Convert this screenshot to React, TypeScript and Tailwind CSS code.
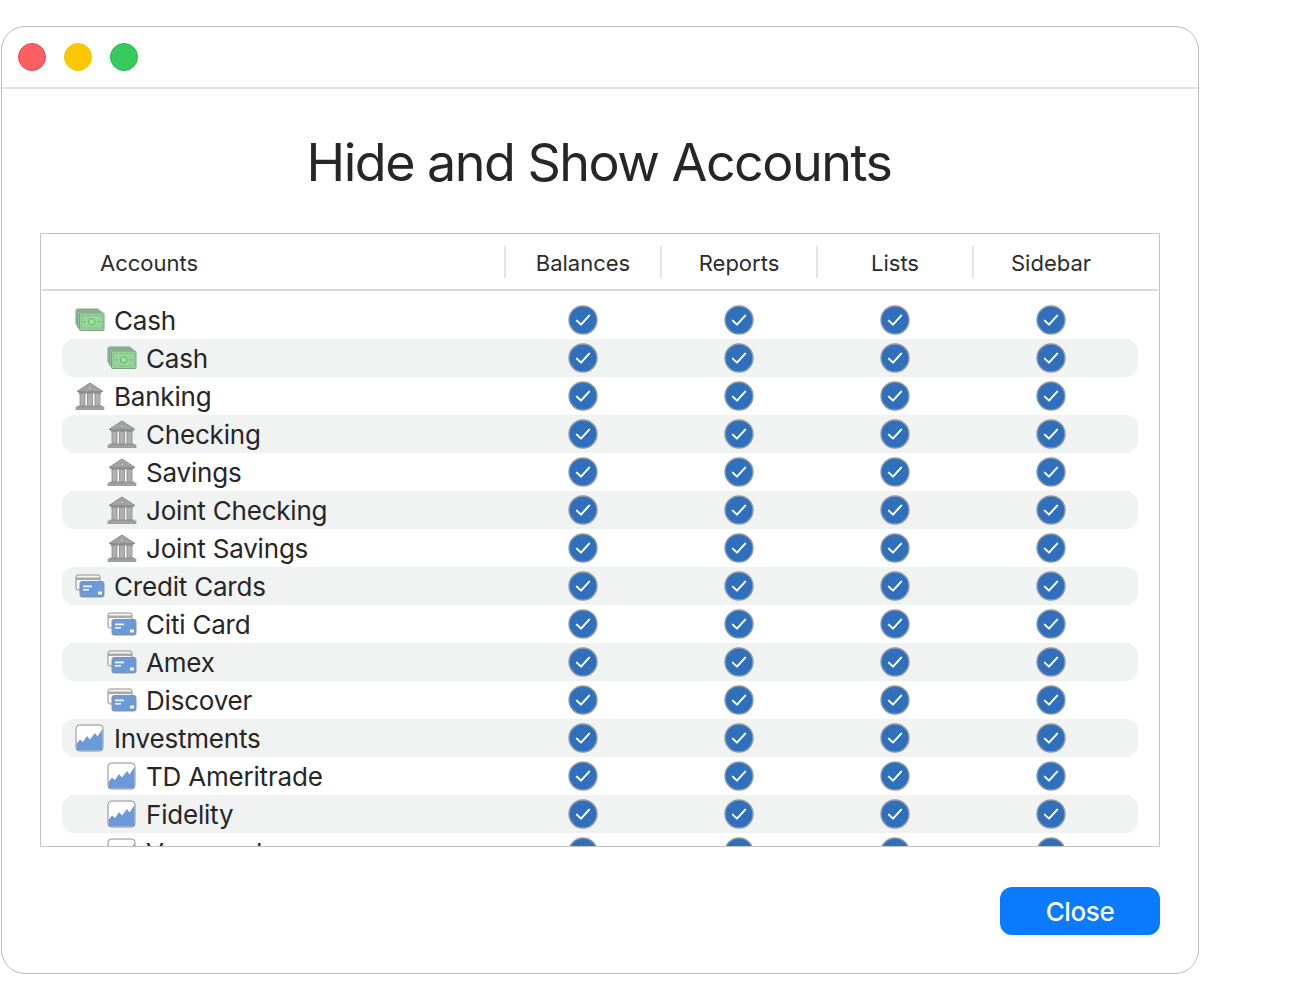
import React from 'react';

type Kind = 'cash' | 'bank' | 'card' | 'chart';

interface Row {
  name: string;
  kind: Kind;
  child?: boolean;
}

const rows: Row[] = [
  { name: 'Cash', kind: 'cash' },
  { name: 'Cash', kind: 'cash', child: true },
  { name: 'Banking', kind: 'bank' },
  { name: 'Checking', kind: 'bank', child: true },
  { name: 'Savings', kind: 'bank', child: true },
  { name: 'Joint Checking', kind: 'bank', child: true },
  { name: 'Joint Savings', kind: 'bank', child: true },
  { name: 'Credit Cards', kind: 'card' },
  { name: 'Citi Card', kind: 'card', child: true },
  { name: 'Amex', kind: 'card', child: true },
  { name: 'Discover', kind: 'card', child: true },
  { name: 'Investments', kind: 'chart' },
  { name: 'TD Ameritrade', kind: 'chart', child: true },
  { name: 'Fidelity', kind: 'chart', child: true },
  { name: 'Vanguard', kind: 'chart', child: true },
];

const columns = ['Balances', 'Reports', 'Lists', 'Sidebar'];

const AccountIcon: React.FC<{ kind: Kind }> = ({ kind }) => {
  if (kind === 'cash') {
    return (
      <svg width="30" height="24" viewBox="0 0 30 24" className="shrink-0">
        <rect x="1" y="1" width="23" height="16" rx="1.5" fill="#94bd96" stroke="#7f9f86" />
        <rect x="2.5" y="3" width="24" height="17" rx="1.5" fill="#94c498" stroke="#7f9f86" />
        <rect x="4.5" y="5" width="24.5" height="17.5" rx="1" fill="#98d39c" stroke="#7d9c84" />
        <rect x="6.5" y="7.5" width="20.5" height="12.5" fill="#97d69b" stroke="#7fb088" strokeWidth="0.6" />
        <circle cx="16.7" cy="13.8" r="3.2" fill="#8bef8f" stroke="#6aa878" />
        <circle cx="9.5" cy="13.8" r="0.9" fill="#6f9f7c" />
        <circle cx="24" cy="13.8" r="0.9" fill="#6f9f7c" />
      </svg>
    );
  }
  if (kind === 'bank') {
    return (
      <svg width="30" height="28" viewBox="0 0 30 28" className="shrink-0">
        <path d="M15 1 L28 9.5 L2 9.5 Z" fill="#a4a4a4" stroke="#8a8a8a" strokeLinejoin="round" />
        <circle cx="15" cy="6.3" r="1.6" fill="#c9c9c9" stroke="#858585" strokeWidth="0.6" />
        <rect x="3.5" y="9.5" width="23" height="2" fill="#8f8f8f" />
        <rect x="5" y="11.5" width="5" height="12" fill="#b0b0b0" stroke="#8a8a8a" strokeWidth="0.8" />
        <rect x="12.5" y="11.5" width="5" height="12" fill="#b0b0b0" stroke="#8a8a8a" strokeWidth="0.8" />
        <rect x="20" y="11.5" width="5" height="12" fill="#b0b0b0" stroke="#8a8a8a" strokeWidth="0.8" />
        <rect x="2.5" y="23.5" width="25" height="1.5" fill="#9a9a9a" />
        <rect x="1" y="25" width="28" height="3" fill="#a3a3a3" stroke="#8d8d8d" strokeWidth="0.6" />
      </svg>
    );
  }
  if (kind === 'card') {
    return (
      <svg width="30" height="24" viewBox="0 0 30 24" className="shrink-0">
        <rect x="1" y="1" width="24" height="15" rx="2" fill="#f6f6f6" stroke="#8e8e8e" />
        <rect x="1" y="3.5" width="24" height="2.5" fill="#a9a9a9" />
        <rect x="5" y="7.5" width="24" height="15.5" rx="2" fill="#6c9ad9" stroke="#85929f" />
        <rect x="8" y="11.5" width="9" height="1.8" fill="#f2f6fb" />
        <rect x="8" y="15" width="6" height="1.6" fill="#f2f6fb" />
        <rect x="23" y="17.5" width="4" height="3" fill="#f2f6fb" />
      </svg>
    );
  }
  return (
    <svg width="30" height="28" viewBox="0 0 30 28" className="shrink-0">
      <rect x="1" y="1" width="27" height="26" rx="3.5" fill="#ffffff" stroke="#8e8e8e" />
      <path
        d="M1.5 20 L5 15.5 L8 18 L12 12 L15 15.5 L20 9 L22.5 12.5 L27.5 5 L27.5 24 Q27.5 26.5 25 26.5 L4 26.5 Q1.5 26.5 1.5 24 Z"
        fill="#6c9ad9"
      />
    </svg>
  );
};

const Check: React.FC = () => (
  <svg width="30" height="30" viewBox="0 0 30 30" className="shrink-0">
    <circle cx="15" cy="15" r="14" fill="#2f6fbc" stroke="#8f9aa6" strokeWidth="1.4" />
    <path
      d="M8.8 15.6 L13 19.6 L21.2 10.6"
      fill="none"
      stroke="#ffffff"
      strokeWidth="2"
      strokeLinecap="round"
      strokeLinejoin="round"
    />
  </svg>
);

export default function App() {
  return (
    <div
      className="w-[1300px] h-[1000px] bg-white pt-[26px] pl-px overflow-hidden text-[#262626]"
      style={{ fontFamily: 'Inter, "Noto Sans", sans-serif' }}
    >
      <div className="w-[1198px] h-[948px] border border-[#bcbcbc] rounded-[24px] flex flex-col">
        {/* Title bar */}
        <div className="h-[62px] shrink-0 border-b-2 border-[#e4e4e4] flex items-center gap-[18px] pl-[16px]">
          <div className="w-[28px] h-[28px] rounded-full bg-[#fe5f62] border border-[#f0444c]"></div>
          <div className="w-[28px] h-[28px] rounded-full bg-[#fdc800] border border-[#f5c300]"></div>
          <div className="w-[28px] h-[28px] rounded-full bg-[#37ca5d] border border-[#1fb948]"></div>
        </div>

        <h1 className="h-[144px] shrink-0 pt-[4px] pr-[2px] flex items-center justify-center text-[52px] font-normal tracking-[-1.5px] text-[#262626]">
          Hide and Show Accounts
        </h1>

        {/* Table */}
        <div className="mx-[38px] w-[1120px] h-[614px] shrink-0 border border-[#c4c4c4] overflow-hidden">
          <div className="h-[57px] mx-px border-b-2 border-[#d9d9d9] flex items-center text-[22px] text-[#2c2c2c]">
            <div className="w-[462px] pl-[58px] pt-[4px]">Accounts</div>
            {columns.map((col) => (
              <div key={col} className="w-[156px] h-[32px] pt-[2px] border-l-2 border-[#e4e4e4] flex items-center justify-center">
                <span className="mt-[2px]">{col}</span>
              </div>
            ))}
          </div>

          <div className="pt-[10px] px-[21px]">
            {rows.map((row, i) => (
              <div
                key={row.name + i}
                className={`h-[38px] flex items-center rounded-[12px] ${i % 2 === 1 ? 'bg-[#f1f2f2]' : ''}`}
              >
                <div className={`w-[443px] flex items-center gap-[9px] text-[26px] leading-none tracking-[-0.2px] ${row.child ? 'pl-[45px]' : 'pl-[13px]'}`}>
                  <AccountIcon kind={row.kind} />
                  <span className="mt-[2px]">{row.name}</span>
                </div>
                {columns.map((col) => (
                  <div key={col} className="w-[156px] flex justify-center">
                    <Check />
                  </div>
                ))}
              </div>
            ))}
          </div>
        </div>

        {/* Footer */}
        <div className="flex justify-end pt-[40px] pr-[38px]">
          <button className="w-[160px] h-[48px] rounded-[12px] bg-[#0a7aff] text-white text-[26px] font-medium tracking-[-0.4px]">
            Close
          </button>
        </div>
      </div>
    </div>
  );
}
